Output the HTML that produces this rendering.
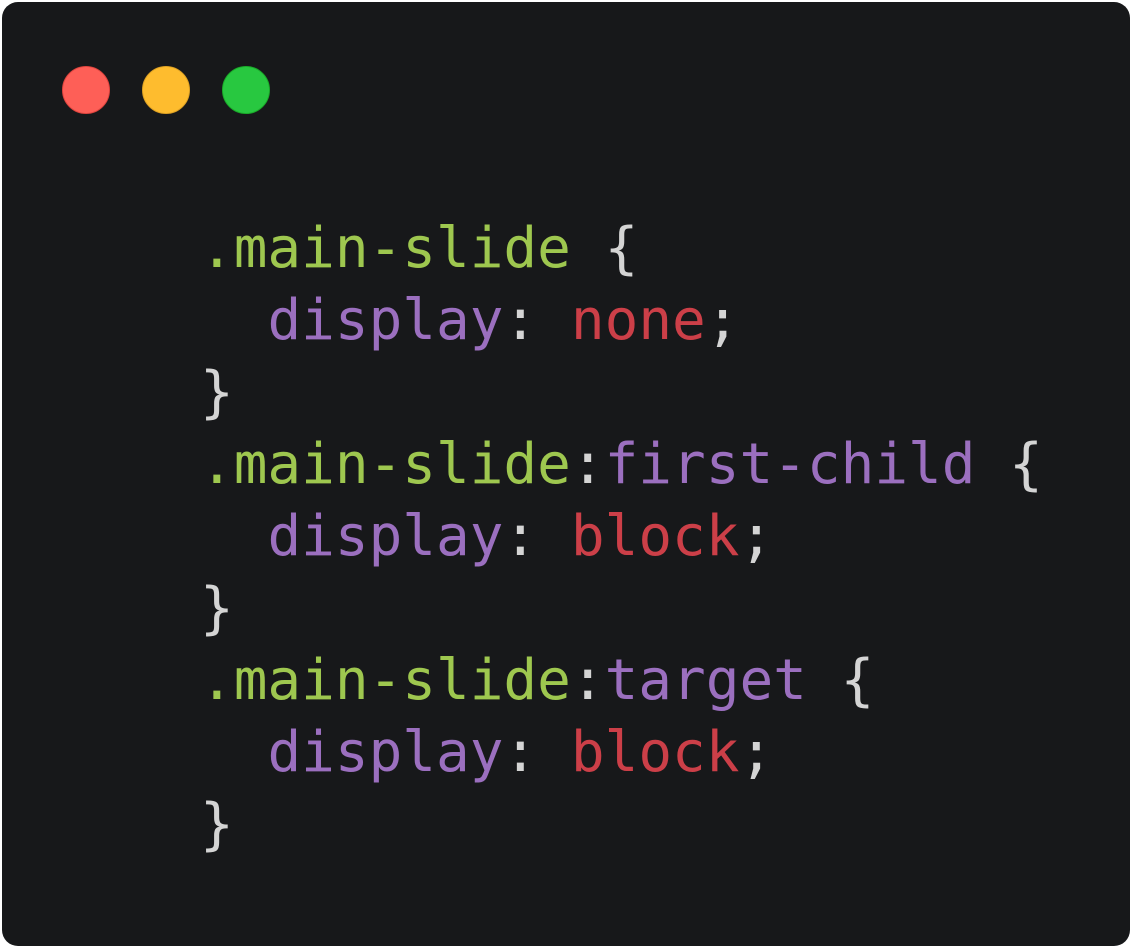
<!DOCTYPE html>
<html><head><meta charset="utf-8"><style>
html,body{margin:0;padding:0;background:#fff;width:1132px;height:948px;overflow:hidden}
.card{position:absolute;left:2px;top:2px;width:1128px;height:944px;background:#17181a;border-radius:16px}
.dot{position:absolute;top:64px;width:46px;height:46px;border-radius:50%;border:1px solid}
pre{position:absolute;left:200px;top:213px;margin:0;font-family:"DejaVu Sans Mono","Liberation Mono",monospace;font-size:56px;line-height:72px;color:#d4d4d4}
.g{color:#9ec74f}.p{color:#9b6fbf}.r{color:#cc3f48}
</style></head><body>
<div class="card">
<div class="dot" style="left:60px;background:#fe5f57;border-color:#e0443e"></div>
<div class="dot" style="left:140px;background:#febc2e;border-color:#dea123"></div>
<div class="dot" style="left:220px;background:#28c840;border-color:#1aab29"></div>
</div>
<pre><span class="g">.main-slide</span> {
  <span class="p">display</span>: <span class="r">none</span>;
}
<span class="g">.main-slide</span>:<span class="p">first-child</span> {
  <span class="p">display</span>: <span class="r">block</span>;
}
<span class="g">.main-slide</span>:<span class="p">target</span> {
  <span class="p">display</span>: <span class="r">block</span>;
}</pre>
</body></html>
